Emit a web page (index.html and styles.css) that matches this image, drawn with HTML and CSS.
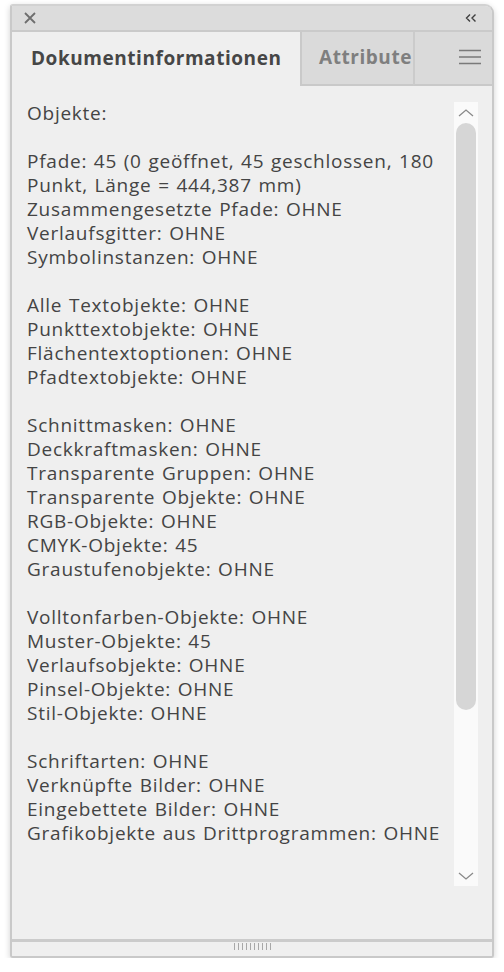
FILE: index.html
```html
<!DOCTYPE html>
<html lang="de">
<head>
<meta charset="utf-8">
<title>Dokumentinformationen</title>
<link rel="stylesheet" href="styles.css">
</head>
<body>
<div class="panel">
  <div class="titlebar">
    <svg class="close" width="14" height="14" viewBox="0 0 14 14"><path d="M2 2 L12 12 M12 2 L2 12" stroke="#6e6e6e" stroke-width="1.8" fill="none"/></svg>
    <svg class="collapse" width="12" height="10" viewBox="0 0 12 10"><path d="M5 1.5 L1.5 5 L5 8.5 M10.5 1.5 L7 5 L10.5 8.5" stroke="#3f3f3f" stroke-width="1.4" fill="none"/></svg>
  </div>
  <div class="tabs">
    <div class="tab active">Dokumentinformationen</div>
    <div class="tab inactive">Attribute</div>
    <div class="tab menu">
      <svg width="22" height="16" viewBox="0 0 22 16"><path d="M0 1.5 H22 M0 8 H22 M0 14.5 H22" stroke="#7a7a7a" stroke-width="1.4" fill="none"/></svg>
    </div>
  </div>
  <div class="content">
    <div class="text">
      <p>Objekte:</p>
      <p class="blank"></p>
      <p>Pfade: 45 (0 geöffnet, 45 geschlossen, 180<br>Punkt, Länge = 444,387 mm)</p>
      <p>Zusammengesetzte Pfade: OHNE</p>
      <p>Verlaufsgitter: OHNE</p>
      <p>Symbolinstanzen: OHNE</p>
      <p class="blank"></p>
      <p>Alle Textobjekte: OHNE</p>
      <p>Punkttextobjekte: OHNE</p>
      <p>Flächentextoptionen: OHNE</p>
      <p>Pfadtextobjekte: OHNE</p>
      <p class="blank"></p>
      <p>Schnittmasken: OHNE</p>
      <p>Deckkraftmasken: OHNE</p>
      <p>Transparente Gruppen: OHNE</p>
      <p>Transparente Objekte: OHNE</p>
      <p>RGB-Objekte: OHNE</p>
      <p>CMYK-Objekte: 45</p>
      <p>Graustufenobjekte: OHNE</p>
      <p class="blank"></p>
      <p>Volltonfarben-Objekte: OHNE</p>
      <p>Muster-Objekte: 45</p>
      <p>Verlaufsobjekte: OHNE</p>
      <p>Pinsel-Objekte: OHNE</p>
      <p>Stil-Objekte: OHNE</p>
      <p class="blank"></p>
      <p>Schriftarten: OHNE</p>
      <p>Verknüpfte Bilder: OHNE</p>
      <p>Eingebettete Bilder: OHNE</p>
      <p>Grafikobjekte aus Drittprogrammen: OHNE</p>
    </div>
    <div class="scrollbar">
      <div class="arrow up"><svg width="16" height="8" viewBox="0 0 16 8"><path d="M1 7 L8 1 L15 7" stroke="#8a8a8a" stroke-width="1.3" fill="none"/></svg></div>
      <div class="thumb"></div>
      <div class="track-rest"></div>
      <div class="arrow down"><svg width="16" height="8" viewBox="0 0 16 8"><path d="M1 1 L8 7 L15 1" stroke="#8a8a8a" stroke-width="1.3" fill="none"/></svg></div>
    </div>
  </div>
  <div class="footer">
    <div class="grip"></div>
  </div>
</div>
</body>
</html>
```
FILE: styles.css
```css
html, body {
  margin: 0;
  padding: 0;
  background: #ffffff;
}
body {
  font-family: "Open Sans", "Noto Sans", sans-serif;
  color: #4a4a4a;
}
.panel {
  margin: 4px 0 0 10px;
  width: 480px;
  height: 950px;
  border: 2px solid #c9c9c9;
  border-top-color: #d2d2d2;
  border-radius: 3px 9px 3px 3px;
  background: #efefef;
  box-shadow: 0 2px 6px rgba(0,0,0,0.18);
  display: flex;
  flex-direction: column;
  overflow: hidden;
}
.titlebar {
  height: 24px;
  flex: none;
  background: #dcdcdc;
  border-bottom: 2px solid #cacaca;
  display: flex;
  align-items: center;
  justify-content: space-between;
  padding: 0 15px 0 11px;
}
.tabs {
  height: 54px;
  flex: none;
  display: flex;
}
.tab {
  display: flex;
  align-items: center;
  font-weight: 700;
  font-size: 19px;
  box-sizing: border-box;
  padding-bottom: 3px;
}
.tab.active {
  width: 288px;
  padding-left: 19px;
  background: #efefef;
  color: #464646;
  letter-spacing: 0.55px;
}
.tab.inactive {
  width: 113px;
  padding-left: 17px;
  background: #dadada;
  color: #7f7f7f;
  border-left: 2px solid #c9c9c9;
  border-bottom: 2px solid #c9c9c9;
  letter-spacing: 0.55px;
}
.tab.menu {
  flex: 1;
  background: #dadada;
  border-left: 2px solid #cbcbcb;
  border-bottom: 2px solid #c9c9c9;
  justify-content: flex-end;
  padding-right: 11px;
}
.content {
  flex: 1;
  display: flex;
  position: relative;
  min-height: 0;
}
.text {
  flex: 1;
  padding: 15px 0 0 15px;
  font-size: 19px;
  line-height: 24px;
  letter-spacing: 0.75px;
  word-spacing: 1px;
  color: #444444;
}
.text p {
  margin: 0;
  white-space: nowrap;
}
.text p.blank {
  height: 24px;
}
.scrollbar {
  width: 24px;
  margin: 16px 14px 0 0;
  height: 784px;
  background: #fafafa;
  display: flex;
  flex-direction: column;
  align-items: center;
}
.arrow {
  height: 21px;
  display: flex;
  align-items: center;
  justify-content: center;
  flex: none;
}
.thumb {
  width: 20px;
  height: 587px;
  background: #d6d6d6;
  border-radius: 10px;
  flex: none;
}
.track-rest {
  flex: 1;
}
.footer {
  height: 13px;
  flex: none;
  border-top: 3px solid #cbcbcb;
  background: #efefef;
  display: flex;
  justify-content: center;
  padding-top: 1px;
}
.grip {
  width: 38px;
  height: 7px;
  margin-left: 1px;
  background: repeating-linear-gradient(90deg, #a8a8a8 0 1px, transparent 1px 4px);
}
```
